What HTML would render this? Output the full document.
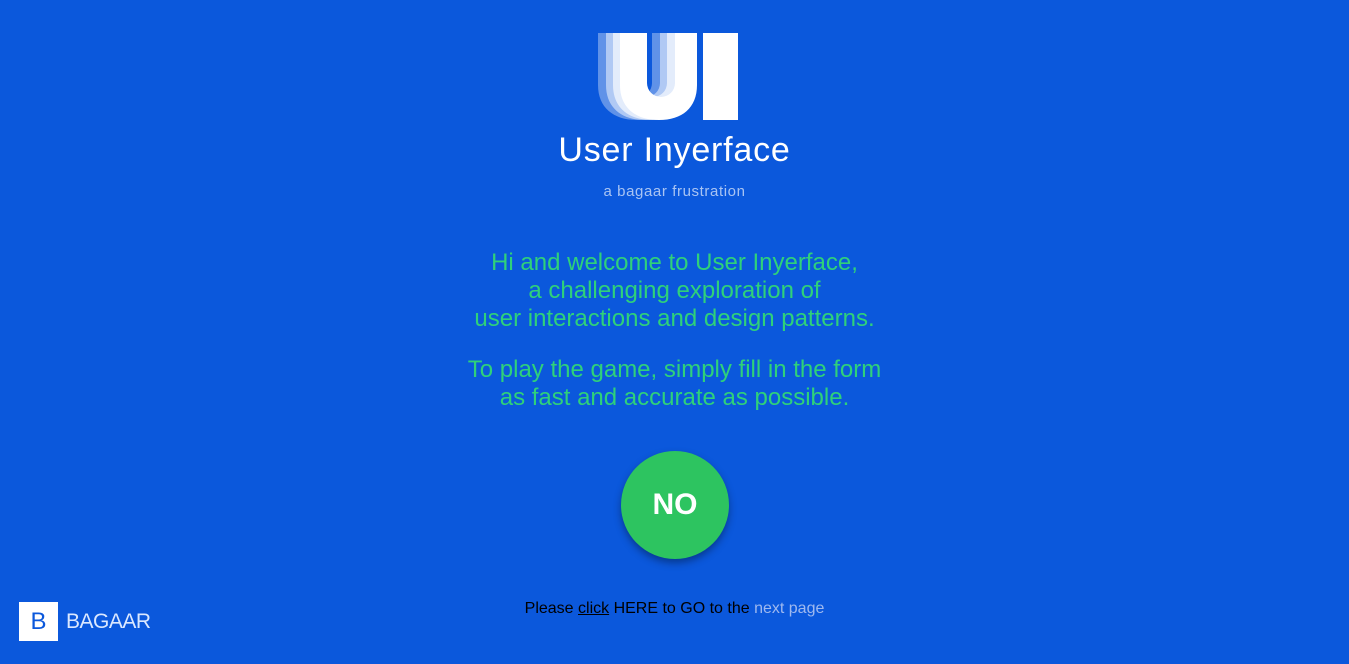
<!DOCTYPE html>
<html><head><style>
body{margin:0;width:1349px;height:664px;background:#0b58dc;font-family:"Liberation Sans",sans-serif;overflow:hidden;position:relative}
.c{position:absolute;left:0;width:1349px;text-align:center}
.g{color:#2fd17a;font-size:24px;line-height:28px}
</style></head><body>
<svg style="position:absolute;left:590px;top:30px" width="160" height="95" viewBox="590 30 160 95">
<g fill="#fff">
<path opacity="0.35" d="M598 33h26v50a14 14 0 0 0 28 0v-50h24v52c0 23-16 35-39 35s-39-12-39-35z"/>
<path opacity="0.5" d="M606 33h26v50a14 14 0 0 0 28 0v-50h24v52c0 23-16 35-39 35s-39-12-39-35z"/>
<path opacity="0.65" d="M613 33h26v50a14 14 0 0 0 28 0v-50h24v52c0 23-16 35-39 35s-39-12-39-35z"/>
<path d="M620 33h27v50a14 14 0 0 0 28 0v-50h22v52c0 23-15 35-38 35s-39-12-39-35z"/>
<rect x="703" y="33" width="35" height="87"/>
</g></svg>
<div class="c" style="top:131px;color:#fff;font-size:34px;letter-spacing:0.8px">User Inyerface</div>
<div class="c" style="top:183px;color:#a9c4f3;font-size:15px;letter-spacing:0.6px">a bagaar frustration</div>
<div class="c g" style="top:249px">Hi and welcome to User Inyerface,<br>a challenging exploration of<br>user interactions and design patterns.</div>
<div class="c g" style="top:356px">To play the game, simply fill in the form<br>as fast and accurate as possible.</div>
<div style="position:absolute;left:621px;top:451px;width:108px;height:108px;border-radius:50%;background:#2dc460;box-shadow:0 4px 8px rgba(0,0,0,.35);color:#fff;font-weight:bold;font-size:30px;line-height:108px;text-align:center">NO</div>
<div class="c" style="top:600px;font-size:16px;color:#000">Please <u>click</u> HERE to GO to the <span style="color:#9fb9ef">next page</span></div>
<div style="position:absolute;left:19px;top:602px;width:39px;height:39px;background:#fff;color:#0b58dc;font-size:24px;line-height:39px;text-align:center">B</div>
<div style="position:absolute;left:66px;top:610px;color:#dbe8ff;font-size:21px;letter-spacing:-0.5px">BAGAAR</div>
</body></html>
